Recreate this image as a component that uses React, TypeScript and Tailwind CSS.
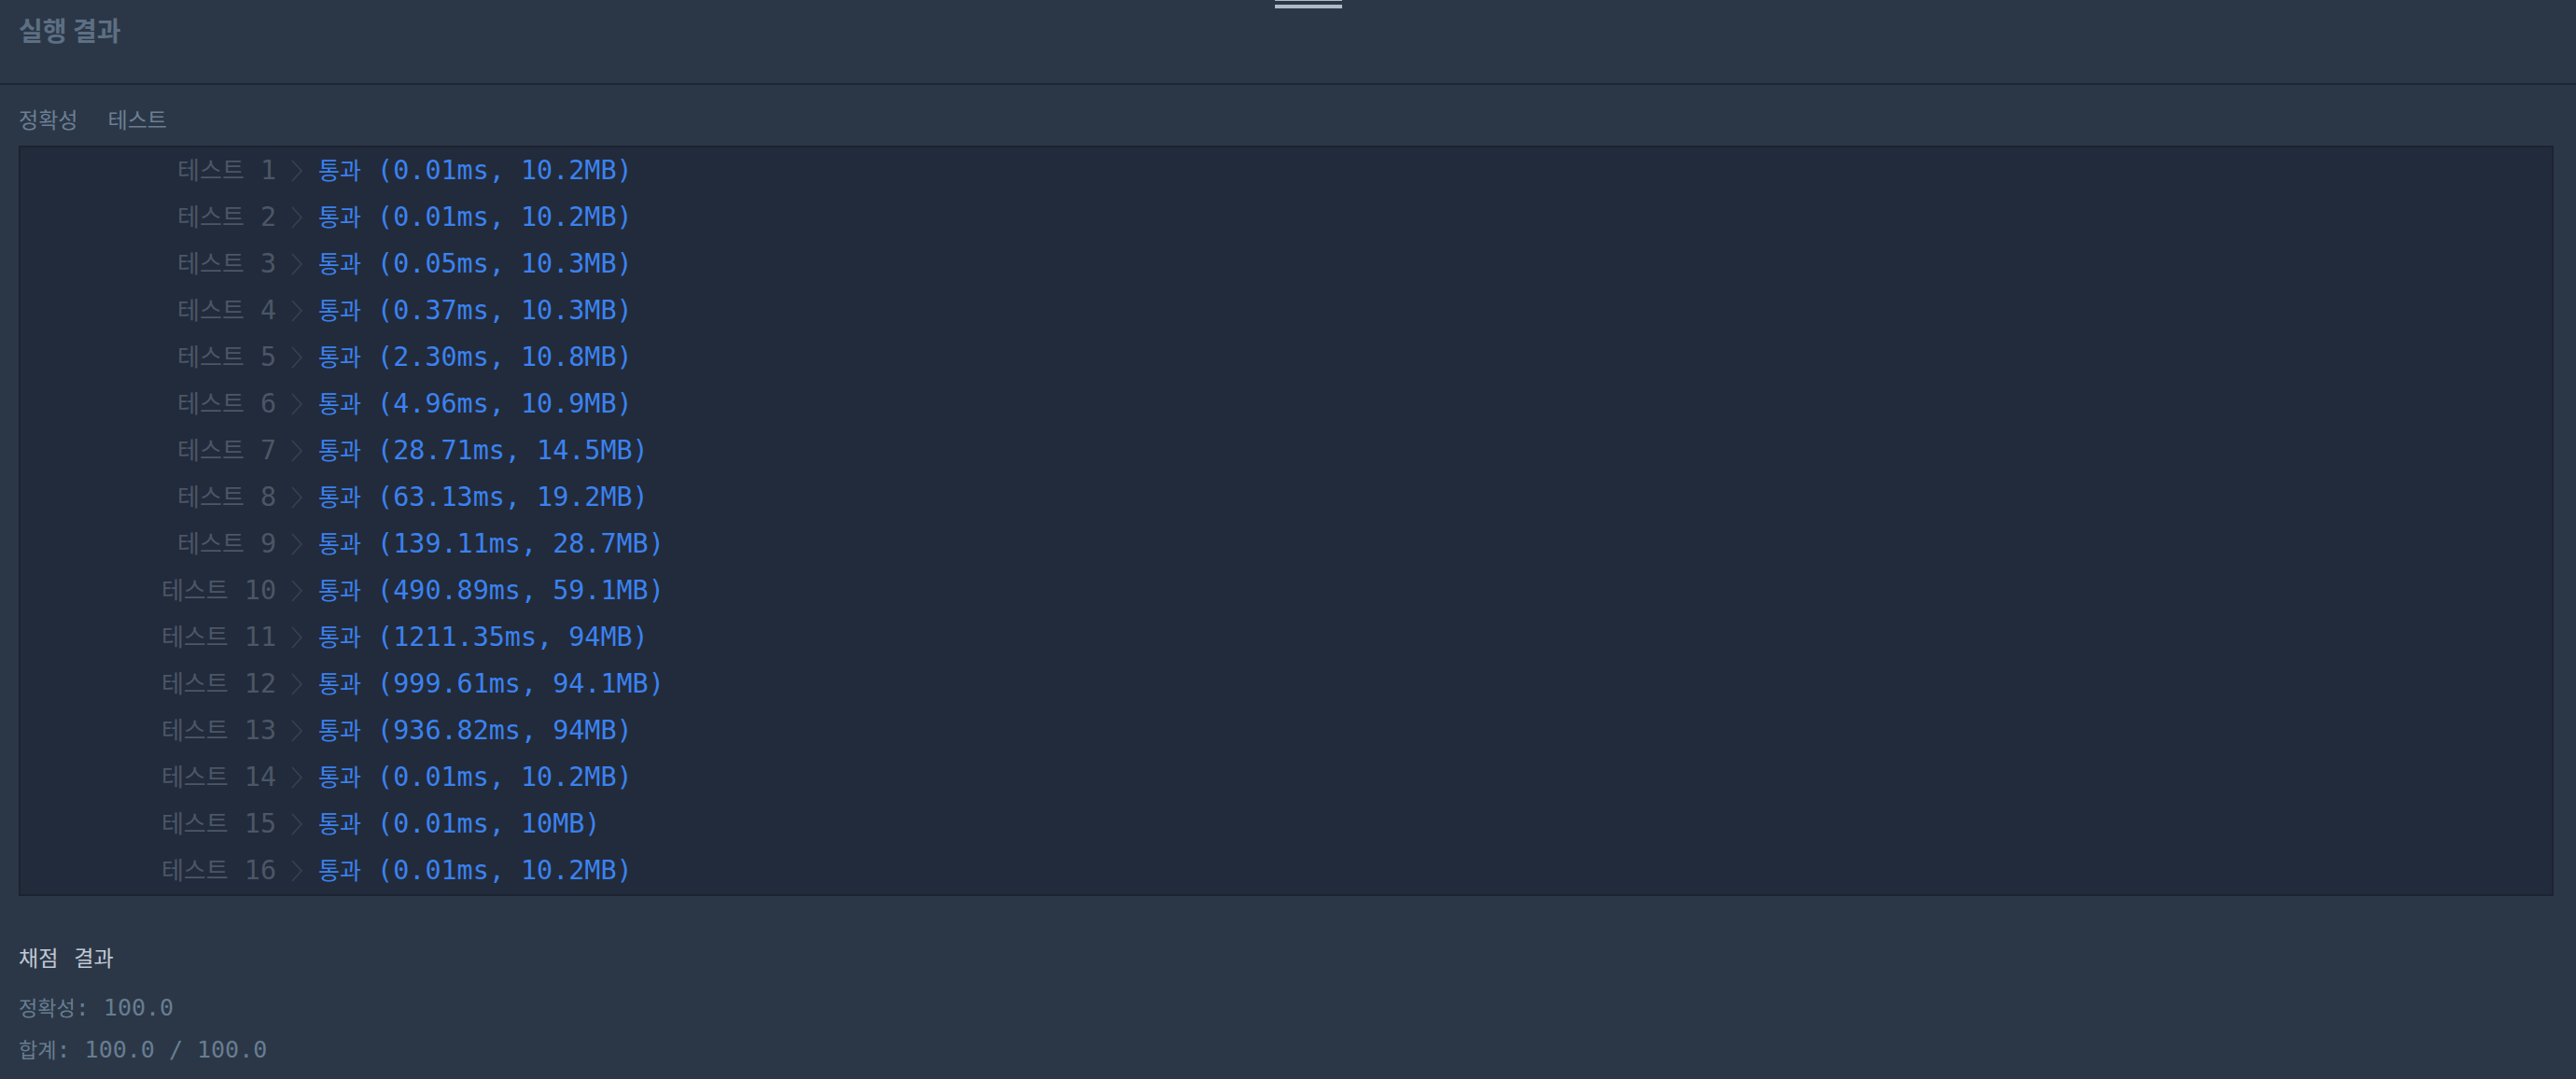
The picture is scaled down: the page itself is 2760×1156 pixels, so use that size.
const results: [number, string][] = [
  [1, "(0.01ms, 10.2MB)"],
  [2, "(0.01ms, 10.2MB)"],
  [3, "(0.05ms, 10.3MB)"],
  [4, "(0.37ms, 10.3MB)"],
  [5, "(2.30ms, 10.8MB)"],
  [6, "(4.96ms, 10.9MB)"],
  [7, "(28.71ms, 14.5MB)"],
  [8, "(63.13ms, 19.2MB)"],
  [9, "(139.11ms, 28.7MB)"],
  [10, "(490.89ms, 59.1MB)"],
  [11, "(1211.35ms, 94MB)"],
  [12, "(999.61ms, 94.1MB)"],
  [13, "(936.82ms, 94MB)"],
  [14, "(0.01ms, 10.2MB)"],
  [15, "(0.01ms, 10MB)"],
  [16, "(0.01ms, 10.2MB)"],
]

const mono = "font-['DejaVu_Sans_Mono','Noto_Sans_CJK_KR',monospace]"
const kr = "font-['Noto_Sans_CJK_KR',sans-serif]"

function Chevron() {
  return (
    <svg width="14" height="26" viewBox="0 0 14 26" className="ml-[15px] shrink-0">
      <path d="M2 2 L12 13 L2 24" fill="none" stroke="#374251" strokeWidth="1.6" />
    </svg>
  )
}

function ResultRow({ n, text }: { n: number; text: string }) {
  return (
    <div className="flex h-[50px] items-center leading-[50px] whitespace-pre">
      <div className="w-[274px] shrink-0 text-right text-[#4b5667]">
        <span className={`${kr} text-[26px]`}>테스트</span>
        <span className={`${mono} text-[28.4px]`}> {n}</span>
      </div>
      <Chevron />
      <div className="ml-[16px] text-[#3b82f0]">
        <span className={`${kr} text-[25px]`}>통과</span>
        <span className={`${mono} text-[28.4px]`}> {text}</span>
      </div>
    </div>
  )
}

export default function App() {
  return (
    <div className="relative min-h-screen bg-[#2b3747]">
      {/* drag handle */}
      <div className="absolute top-0 left-[1366px] w-[72px]">
        <div className="h-px bg-[#b0bac5]" />
        <div className="mt-1 h-1 bg-[#b0bac5]" />
      </div>

      {/* header */}
      <div className="h-[91px] border-b-2 border-[#1e2633] pl-[20px] pt-[13px]">
        <h2 className={`${kr} text-[28px] font-bold leading-[38px] text-[#5d6f84]`}>실행 결과</h2>
      </div>

      <div className="pl-[20px] pr-[24px]">
        {/* tabs */}
        <div className={`${kr} mt-[20px] flex gap-[32px] text-[23px] leading-[32px] text-[#6b7f94]`}>
          <span>정확성</span>
          <span>테스트</span>
        </div>

        {/* console */}
        <div className="mt-[13px] border-2 border-[#1c2330] bg-[#222b3b]">
          {results.map(([n, text]) => (
            <ResultRow key={n} n={n} text={text} />
          ))}
        </div>

        {/* summary */}
        <div className={`${kr} mt-[47px] flex gap-[17px] text-[23px] leading-[36px] text-[#c0cad5]`}>
          <span>채점</span>
          <span>결과</span>
        </div>
        <div className="mt-[13px] text-[#687d91] whitespace-pre">
          <div className="leading-[44px]">
            <span className={`${kr} text-[22px]`}>정확성</span>
            <span className={`${mono} text-[25px]`}>: 100.0</span>
          </div>
          <div className="-mt-[3px] leading-[44px]">
            <span className={`${kr} text-[22px]`}>합계</span>
            <span className={`${mono} text-[25px]`}>: 100.0 / 100.0</span>
          </div>
        </div>
      </div>
    </div>
  )
}
